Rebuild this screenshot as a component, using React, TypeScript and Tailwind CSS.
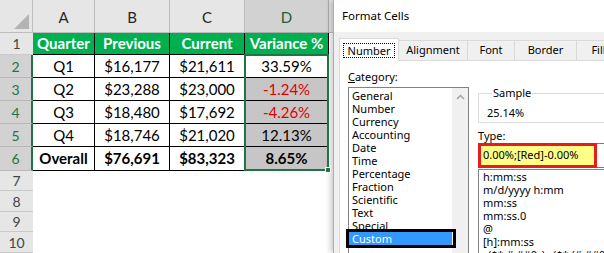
import * as React from "react"

const rows = [
    { q: "Q1", prev: "$16,177", cur: "$21,611", v: "33.59%", neg: false },
    { q: "Q2", prev: "$23,288", cur: "$23,000", v: "-1.24%", neg: true },
    { q: "Q3", prev: "$18,480", cur: "$17,692", v: "-4.26%", neg: true },
    { q: "Q4", prev: "$18,746", cur: "$21,020", v: "12.13%", neg: false },
]

const categories = [
    "General", "Number", "Currency", "Accounting", "Date", "Time",
    "Percentage", "Fraction", "Scientific", "Text", "Special",
]

const typeList = [
    "h:mm:ss",
    "m/d/yyyy h:mm",
    "mm:ss",
    "mm:ss.0",
    "@",
    "[h]:mm:ss",
    "_($* #,##0_);_($* (#,##0);_($* \"-\"_);_(@_)",
]

const cell = "flex items-center justify-center border-r border-b border-black"
const rowHead = "flex items-center justify-center border-b border-[#c9c9c9] bg-[#e6e6e6] text-[14px] text-[#444]"
const rowHeadSel = "flex items-center justify-center border-b border-[#b8b8b8] border-r-2 border-r-[#217346] bg-[#d2d2d2] text-[14px] text-[#217346]"
const tab = "flex h-[21px] shrink-0 items-center justify-center border border-l-0 border-[#d9d9d9] bg-[#f0f0f0]"

function Sheet() {
    return (
        <div className="grid w-[333px] shrink-0 grid-cols-[33px_62px_75px_75px_84px_4px] grid-rows-[33px_22px_23px_23px_23px_23px_24px_20px_21px_20px_21px] font-['Lato'] text-[15px] text-black">
            {/* column headers */}
            <div className="flex items-end justify-end border-r border-b border-[#bdbdbd] bg-[#e6e6e6] p-[3px]">
                <svg width="15" height="15" viewBox="0 0 15 15">
                    <polygon points="15,0 15,15 0,15" fill="#b4b4b4" />
                </svg>
            </div>
            <div className="flex items-center justify-center border-r border-b border-[#bdbdbd] bg-[#e6e6e6] pt-[3px] text-[#262626]">A</div>
            <div className="flex items-center justify-center border-r border-b border-[#bdbdbd] bg-[#e6e6e6] pt-[3px] text-[#262626]">B</div>
            <div className="flex items-center justify-center border-r border-b border-[#bdbdbd] bg-[#e6e6e6] pt-[3px] text-[#262626]">C</div>
            <div className="flex items-center justify-center border-r border-b border-[#ababab] bg-[#d2d2d2] pt-[3px] text-[#1d5d38]">D</div>
            <div className="border-b border-[#bdbdbd] bg-[#e6e6e6]" />

            {/* row 1 */}
            <div className={rowHead}>1</div>
            <div className={`${cell} bg-[#00b050] font-bold text-white`}>Quarter</div>
            <div className={`${cell} bg-[#00b050] font-bold text-white`}>Previous</div>
            <div className={`${cell} bg-[#00b050] font-bold text-white`}>Current</div>
            <div className={`${cell} bg-[#00b050] font-bold text-white`}>Variance %</div>
            <div />

            {rows.map((r, i) => (
                <React.Fragment key={r.q}>
                    <div className={rowHeadSel}>{i + 2}</div>
                    <div className={cell}>{r.q}</div>
                    <div className={cell}>{r.prev}</div>
                    <div className={cell}>{r.cur}</div>
                    <div className={`${cell} relative ${i === 0 ? "bg-white" : "bg-[#c6c6c6]"} ${r.neg ? "text-[#e00000]" : "text-black"}`}>
                        {r.v}
                        {i === 0 && (
                            // selection outline D2:D6
                            <div className="pointer-events-none absolute -top-[1px] -left-[1px] z-10 h-[117px] w-[85px] border-2 border-[#217346]">
                                <div className="absolute -right-[4px] -bottom-[4px] h-[6px] w-[6px] border border-white bg-[#217346]" />
                            </div>
                        )}
                    </div>
                    <div />
                </React.Fragment>
            ))}

            {/* row 6 */}
            <div className={rowHeadSel}>6</div>
            <div className={`${cell} font-bold`}>Overall</div>
            <div className={`${cell} font-bold`}>$76,691</div>
            <div className={`${cell} font-bold`}>$83,323</div>
            <div className={`${cell} bg-[#c6c6c6] font-bold`}>8.65%</div>
            <div />

            {[7, 8, 9, 10].map((n) => (
                <React.Fragment key={n}>
                    <div className={rowHead}>{n}</div>
                    <div />
                    <div />
                    <div />
                    <div />
                    <div />
                </React.Fragment>
            ))}
        </div>
    )
}

function Dialog() {
    return (
        <div className="flex min-w-0 flex-1 flex-col overflow-hidden border-l border-[#8fb3dc] bg-[#f0f0f0] font-['Noto_Sans'] text-[11px] text-black shadow-[-3px_0_5px_rgba(0,0,0,0.18)]">
            <div className="h-[32px] shrink-0 bg-white pl-[8px] pt-[9px] text-[11.5px] leading-[14px]">Format Cells</div>

            <div className="flex flex-1 flex-col pl-[5px] pt-[6px]">
                {/* tabs */}
                <div className="relative z-10 flex h-[23px] items-end">
                    <div className="flex h-[23px] w-[60px] shrink-0 items-center justify-center border border-b-0 border-[#d9d9d9] bg-white">
                        <span className="border border-dotted border-black px-[4px] leading-[13px]">Number</span>
                    </div>
                    <div className={`${tab} w-[69px]`}>Alignment</div>
                    <div className={`${tab} w-[47px]`}>Font</div>
                    <div className={`${tab} w-[62px]`}>Border</div>
                    <div className={`${tab} w-[44px]`}>Fill</div>
                </div>

                {/* tab page */}
                <div className="-mt-[1px] flex flex-1 border border-r-0 border-[#d9d9d9] bg-white pl-[8px]">
                    <div className="flex w-[121px] shrink-0 flex-col pt-[9px]">
                        <div className="h-[14px] leading-[14px]"><span className="underline">C</span>ategory:</div>
                        <div className="mt-[3px] flex flex-1 border border-[#828282]">
                            <div className="flex flex-1 flex-col pt-[1px]">
                                {categories.map((c) => (
                                    <div key={c} className="h-[13px] pl-[3px] leading-[13px]">{c}</div>
                                ))}
                                <div className="relative h-[13px] bg-[#3399ff] pl-[3px] leading-[13px] text-white">
                                    Custom
                                    <div className="absolute -top-[3px] -bottom-[3px] -left-[3px] -right-[4px] border-[3px] border-black" />
                                </div>
                            </div>
                            <div className="flex w-[16px] shrink-0 justify-center bg-[#f0f0f0] pt-[6px]">
                                <svg width="9" height="6" viewBox="0 0 9 6">
                                    <polyline points="1,5 4.5,1.5 8,5" fill="none" stroke="#a3a3a3" strokeWidth="1.5" />
                                </svg>
                            </div>
                        </div>
                    </div>

                    <div className="ml-[9px] flex w-[150px] shrink-0 flex-col pt-[25px]">
                        <fieldset className="h-[37px] border border-[#dcdcdc] pl-[8px]">
                            <legend className="ml-[5px] px-[1px] leading-[14px]">Sample</legend>
                            <div className="pt-[6px] leading-[14px]">25.14%</div>
                        </fieldset>

                        <div className="mt-[6px] h-[14px] leading-[14px]">Type:</div>

                        <div className="relative h-[25px] border border-[#7a7a7a]">
                            <div className="absolute -top-[1px] -left-[1px] flex h-[25px] w-[119px] items-center border-[3px] border-[#e81c1c] bg-[#ffff88] pl-[2px]">
                                0.00%;[Red]-0.00%
                            </div>
                        </div>

                        <div className="mt-[1px] flex flex-1 flex-col overflow-hidden border border-[#828282] pl-[4px]">
                            {typeList.map((t) => (
                                <div key={t} className="h-[13px] shrink-0 whitespace-nowrap leading-[13px]">{t}</div>
                            ))}
                        </div>
                    </div>
                </div>
            </div>
        </div>
    )
}

export default function App() {
    return (
        <div className="flex h-[253px] w-[604px] overflow-hidden bg-white">
            <Sheet />
            <Dialog />
        </div>
    )
}
